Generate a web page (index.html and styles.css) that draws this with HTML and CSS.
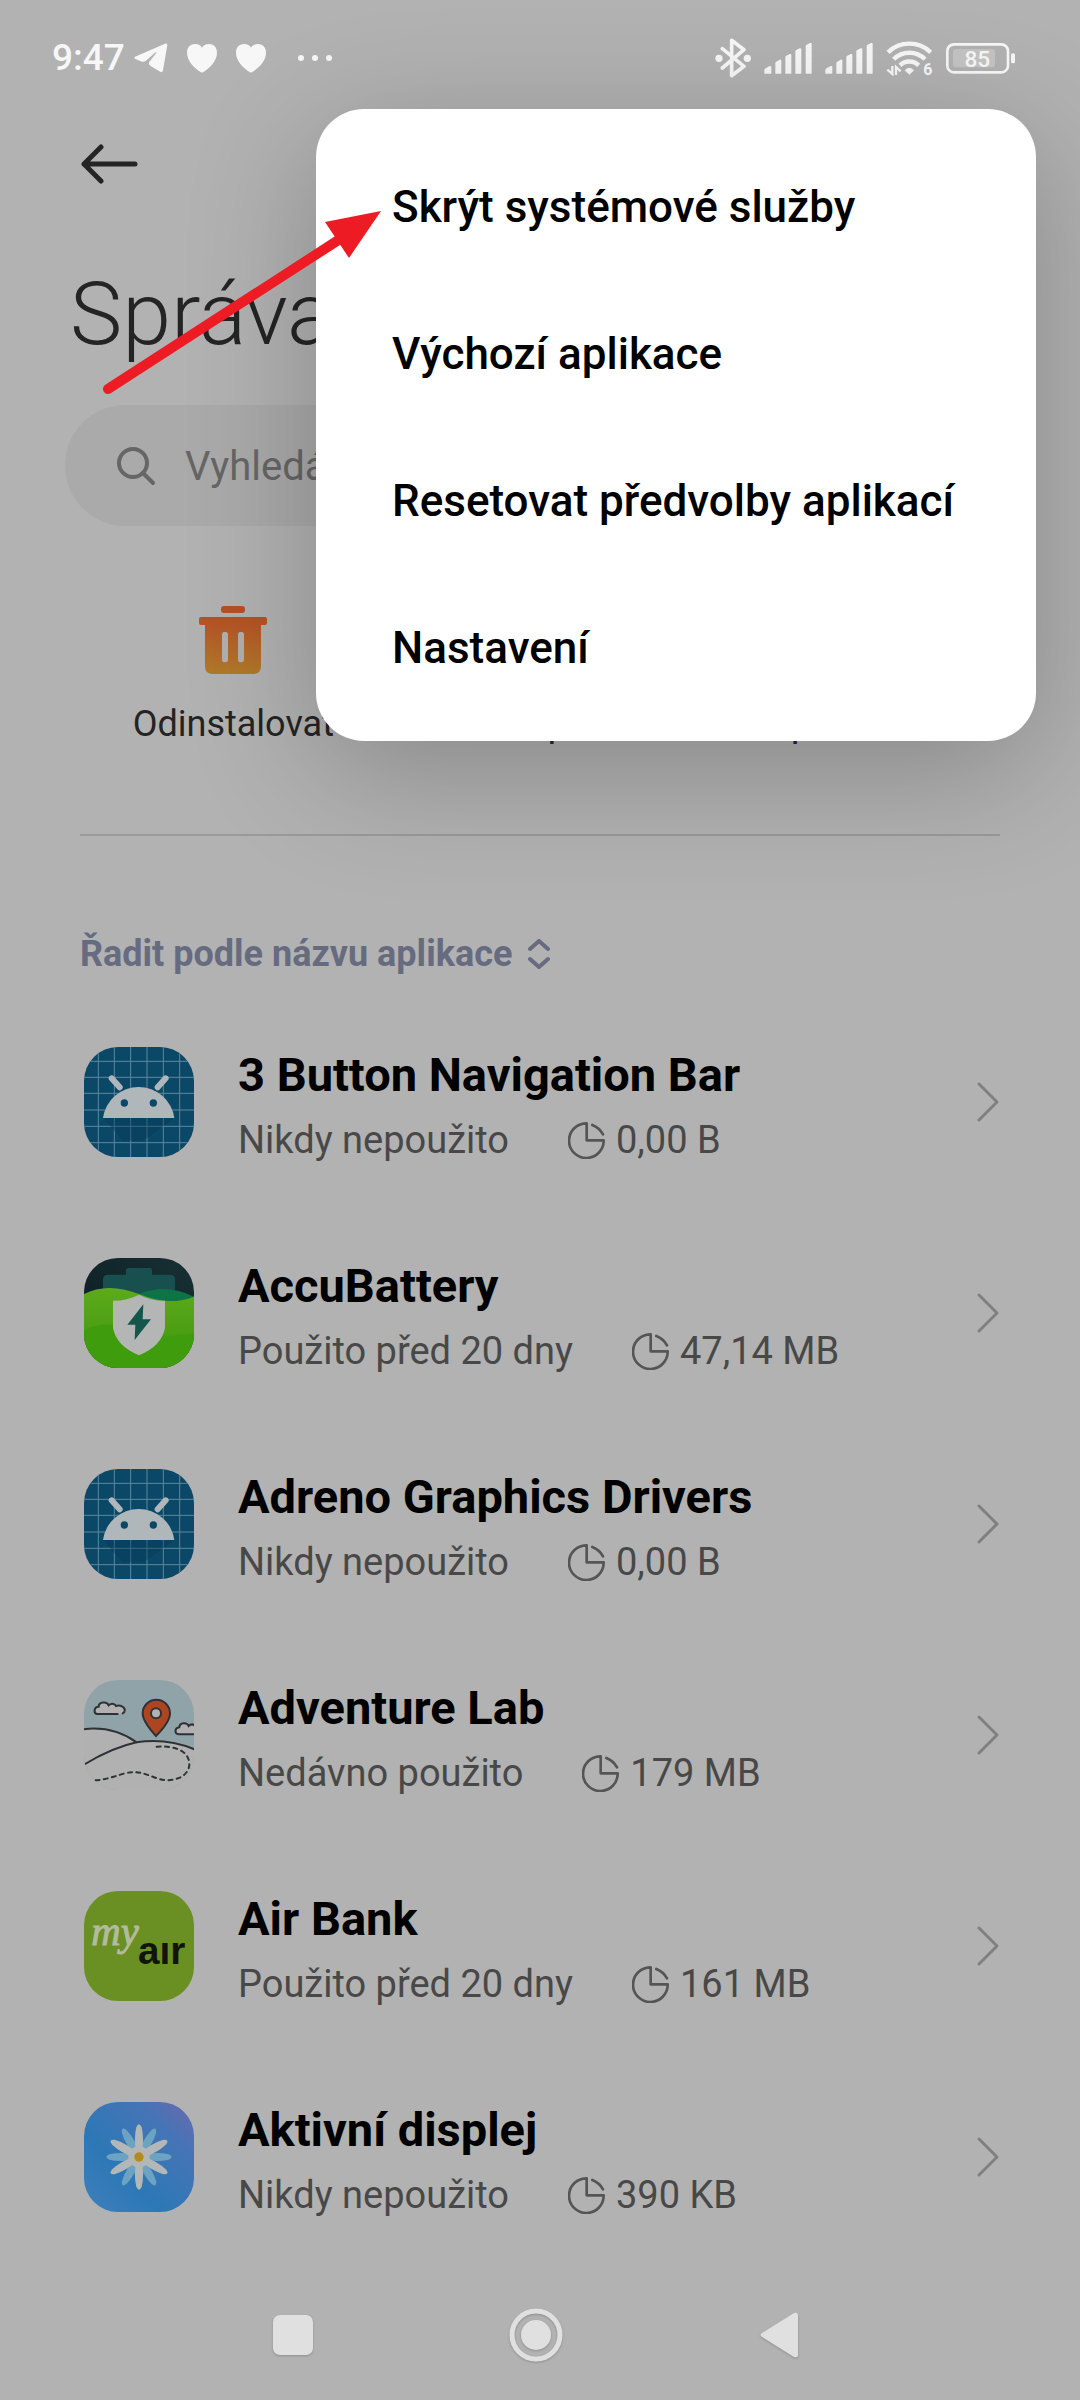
FILE: index.html
```html
<!DOCTYPE html>
<html lang="cs">
<head>
  <meta charset="UTF-8">
  <meta name="viewport" content="width=device-width, initial-scale=1.0">
  <title>Správa aplikací</title>
  <link rel="stylesheet" href="styles.css">
</head>
<body>

<!-- Shared symbols -->
<svg class="symbols" aria-hidden="true">
  <symbol id="heart" viewBox="0 0 90 87">
    <path d="M45 86C20 72 0 50 0 26 0 8 12 0 24 0c10 0 18 5 21 11C48 5 56 0 66 0c12 0 24 8 24 26 0 24-20 46-45 60z"/>
  </symbol>
  <symbol id="signal" viewBox="0 0 144 93">
    <path d="M1 92V82q0-4 4-6l12-7q5-1 5 3v20zM34 92V60q0-3 3-4l10-6q5-1 5 3v39zM64 92V42q0-3 3-4l10-5q5-1 5 3v56zM94 92V25q0-3 3-4l10-5q5-1 5 3v73zM125 92V9q0-3 3-4l10-5q5-1 5 3v89z"/>
  </symbol>
  <symbol id="pie" viewBox="0 0 111 111">
    <path d="M56 4A52 52 0 1 0 107 55H56zM73 9q21 8 32 28" fill="none" stroke="currentColor" stroke-width="8" stroke-linejoin="round" stroke-linecap="round"/>
  </symbol>
  <symbol id="chevron" viewBox="0 0 24 42">
    <path d="M3 3l18 18L3 39" fill="none" stroke="currentColor" stroke-width="3" stroke-linecap="round" stroke-linejoin="round"/>
  </symbol>
  <symbol id="android" viewBox="0 0 330 330">
    <rect width="330" height="330" fill="#0b4868"/>
    <path d="M43 0v330M91 0v330M140 0v330M189 0v330M238 0v330M287 0v330M0 43h330M0 91h330M0 139h330M0 189h330M0 238h330M0 287h330" stroke="#5f8799" stroke-width="3"/>
    <path d="M58 214h212l-90 66h-64z" fill="#083a55" opacity=".4"/>
    <path d="M57 213a108 108 0 0 1 214 0z" fill="#afb7bb"/>
    <path d="M83 94l24 27M245 94l-24 27" stroke="#afb7bb" stroke-width="18" stroke-linecap="round"/>
    <circle cx="121" cy="168" r="11" fill="#0b4868"/>
    <circle cx="208" cy="168" r="11" fill="#0b4868"/>
  </symbol>
</svg>

<div class="status">
  <div class="status-left">
    <span class="time">9:47</span>
    <svg width="34" height="30" viewBox="0 0 102 90"><path d="M3 41q-4 4 1 7l20 8q6 1 12-3l26-23q10-8 2 4L46 56q-4 8 4 13l30 18q6 2 7-5L100 6q0-6-7-4z"/></svg>
    <svg width="30" height="29"><use href="#heart"/></svg>
    <svg width="30" height="29"><use href="#heart"/></svg>
    <svg class="dots" width="36" height="8" viewBox="0 0 36 8"><circle cx="4" cy="4" r="3"/><circle cx="18" cy="4" r="3"/><circle cx="32" cy="4" r="3"/></svg>
  </div>
  <div class="status-right">
    <!-- bluetooth -->
    <svg width="36" height="40" viewBox="0 0 108 120"><path d="M22 32l65 53-37 28V7l37 28-65 55" fill="none" stroke="#f7f7f7" stroke-width="11" stroke-linecap="round" stroke-linejoin="round"/><circle cx="12" cy="61" r="11"/><circle cx="97" cy="61" r="11"/></svg>
    <svg width="48" height="31"><use href="#signal"/></svg>
    <svg width="48" height="31"><use href="#signal"/></svg>
    <!-- wifi -->
    <svg width="47" height="36" viewBox="0 0 141 108">
      <path d="M6 37a92 92 0 0 1 128 0M23 58a66 66 0 0 1 94 0M42 76a40 40 0 0 1 56 0" fill="none" stroke="#f7f7f7" stroke-width="13"/>
      <path d="M56 91q14-16 28 0l-14 13z"/>
      <path d="M19 78v24L4 89M30 105V81l14 13" fill="none" stroke="#f7f7f7" stroke-width="7"/>
      <text x="112" y="104" font-size="48" font-weight="700">6</text>
    </svg>
    <!-- battery -->
    <svg width="69" height="31" viewBox="0 0 207 93">
      <rect x="4" y="4" width="182" height="84" rx="20" fill="none" stroke="#f7f7f7" stroke-width="8"/>
      <rect x="21" y="18" width="126" height="55" rx="9" fill="#c4c4c4"/>
      <rect x="195" y="31" width="12" height="30" rx="5"/>
      <text x="94" y="71" font-size="68" font-weight="500" text-anchor="middle">85</text>
    </svg>
  </div>
</div>

<header class="app-bar">
  <button class="back" aria-label="Zpět">
    <svg width="58" height="40" viewBox="0 0 58 40"><path d="M55 20H4M21 3L4 20l17 17" fill="none" stroke="#242424" stroke-width="5" stroke-linecap="round" stroke-linejoin="round"/></svg>
  </button>
</header>

<main>
  <h1>Správa aplikací</h1>

  <label class="search">
    <svg width="42" height="42" viewBox="0 0 42 42"><circle cx="18" cy="18" r="14" fill="none" stroke="#666" stroke-width="4"/><path d="M28 28l10 10" stroke="#666" stroke-width="4" stroke-linecap="round"/></svg>
    <input type="search" placeholder="Vyhledávání" aria-label="Vyhledávání">
  </label>

  <div class="actions">
    <button>
      <svg width="68" height="68" viewBox="0 0 204 204">
        <defs><linearGradient id="bin" x1="0" y1="0" x2="0" y2="1"><stop offset="0" stop-color="#b65026"/><stop offset="1" stop-color="#b07a2a"/></linearGradient></defs>
        <rect x="66" y="0" width="72" height="21" rx="9" fill="#b65026"/>
        <path d="M6 33h192q6 0 6 6v12q0 6-6 6h-12v124q0 23-23 23H41q-23 0-23-23V57H6q-6 0-6-6V39q0-6 6-6z" fill="url(#bin)"/>
        <rect x="69" y="78" width="18" height="91" rx="7" fill="#b0b0b0"/>
        <rect x="117" y="78" width="18" height="91" rx="7" fill="#b0b0b0"/>
      </svg>
      <span>Odinstalovat</span>
    </button>
    <button>
      <svg width="68" height="68" viewBox="0 0 68 68"><rect x="4" y="4" width="44" height="44" rx="8" fill="#2f66a8"/><rect x="20" y="20" width="44" height="44" rx="8" fill="#3f7cc0"/></svg>
      <span>Duální aplikace</span>
    </button>
    <button>
      <svg width="68" height="68" viewBox="0 0 68 68"><path d="M34 2l28 10v22q0 22-28 32Q6 56 6 34V12z" fill="#2d8a5a"/></svg>
      <span>Oprávnění</span>
    </button>
  </div>

  <hr>

  <button class="sort">
    Řadit podle názvu aplikace
    <svg width="22" height="30" viewBox="0 0 22 30"><path d="M2 10l9-8 9 8M2 20l9 8 9-8" fill="none" stroke="#666b80" stroke-width="4" stroke-linecap="round" stroke-linejoin="round"/></svg>
  </button>

  <div class="apps">
    <a class="app" href="#">
      <svg class="app-icon"><use href="#android"/></svg>
      <div class="app-text">
        <h2>3 Button Navigation Bar</h2>
        <p>Nikdy nepoužito <span class="size"><svg><use href="#pie"/></svg>0,00 B</span></p>
      </div>
      <svg class="chevron"><use href="#chevron"/></svg>
    </a>

    <a class="app" href="#">
      <svg class="app-icon" viewBox="0 0 330 330">
        <defs>
          <linearGradient id="night" x1="0" y1="1" x2="1" y2="0"><stop offset="0" stop-color="#0b1a20"/><stop offset="1" stop-color="#173034"/></linearGradient>
          <linearGradient id="grass" x1="0" y1="0" x2="0" y2="1"><stop offset="0" stop-color="#5dab1c"/><stop offset="1" stop-color="#3d930c"/></linearGradient>
        </defs>
        <rect width="330" height="330" fill="url(#night)"/>
        <path d="M57 140V64q0-14 14-14h55V36q0-6 6-6h66q6 0 6 6v14h55q14 0 14 14v76z" fill="#17504e"/>
        <path d="M165 108q80-34 165 8v40H165z" fill="#0e7346"/>
        <path d="M0 108q70-36 165 0 90 38 165 8v214H0z" fill="url(#grass)"/>
        <path d="M0 216q50-22 90-14 80 50 240 24v104H0z" fill="#3f9c0c"/>
        <path d="M165 110q34 18 78 18v82q-10 54-78 82-68-28-78-82v-82q44 0 78-18z" fill="#b3b6b4"/>
        <path d="M178 139l-48 61h24l-2 46 49-62h-25z" fill="#12564c"/>
      </svg>
      <div class="app-text">
        <h2>AccuBattery</h2>
        <p>Použito před 20 dny <span class="size"><svg><use href="#pie"/></svg>47,14 MB</span></p>
      </div>
      <svg class="chevron"><use href="#chevron"/></svg>
    </a>

    <a class="app" href="#">
      <svg class="app-icon"><use href="#android"/></svg>
      <div class="app-text">
        <h2>Adreno Graphics Drivers</h2>
        <p>Nikdy nepoužito <span class="size"><svg><use href="#pie"/></svg>0,00 B</span></p>
      </div>
      <svg class="chevron"><use href="#chevron"/></svg>
    </a>

    <a class="app" href="#">
      <svg class="app-icon" viewBox="0 0 330 330">
        <rect width="330" height="330" fill="#90a3a9"/>
        <path d="M0 148q90-10 158 38 90-14 172 22v122H0z" fill="#b1b1b1"/>
        <g fill="none" stroke="#2f3234" stroke-width="6" stroke-linecap="round">
          <path d="M-4 148q90-12 162 39M-4 256q90-54 162-69 90-14 176 22"/>
          <path d="M218 200c60-4 96 16 98 50 2 40-50 60-94 46-34-12-60-26-100-16-40 12-70 24-108 20" stroke-dasharray="12 13"/>
          <path d="M101 102H38c-10-4-8-22 6-22 0-16 26-16 30-4 10-8 20-4 22 2 14-4 28 4 26 14 0 4-2 6-6 8" fill="#b1b1b1"/>
          <path d="M340 163h-56c-14-2-12-20 2-21 0-16 24-16 28-4 8-8 16-4 20 0" fill="#b1b1b1"/>
          <path d="M216 168c-26-28-40-48-40-68a41 41 0 0 1 82 0c0 20-16 42-42 68z" fill="#ad4620"/>
          <circle cx="216" cy="100" r="15" fill="#b1b1b1"/>
        </g>
      </svg>
      <div class="app-text">
        <h2>Adventure Lab</h2>
        <p>Nedávno použito <span class="size"><svg><use href="#pie"/></svg>179 MB</span></p>
      </div>
      <svg class="chevron"><use href="#chevron"/></svg>
    </a>

    <a class="app" href="#">
      <svg class="app-icon" viewBox="0 0 330 330">
        <rect width="330" height="330" fill="#6a9024"/>
        <text class="logo-my" x="22" y="162">my</text>
        <text class="logo-air" x="162" y="218">aır</text>
      </svg>
      <div class="app-text">
        <h2>Air Bank</h2>
        <p>Použito před 20 dny <span class="size"><svg><use href="#pie"/></svg>161 MB</span></p>
      </div>
      <svg class="chevron"><use href="#chevron"/></svg>
    </a>

    <a class="app" href="#">
      <svg class="app-icon" viewBox="0 0 330 330">
        <defs>
          <linearGradient id="sky" x1="0" y1="1" x2="1" y2="0"><stop offset="0" stop-color="#3f80ba"/><stop offset=".35" stop-color="#2c78b6"/><stop offset=".75" stop-color="#4674b6"/><stop offset="1" stop-color="#6a6aae"/></linearGradient>
          <path id="petal" d="M158 165q-10-55-1-89 8-18 16 0 9 34-1 89z"/>
        </defs>
        <rect width="330" height="330" fill="url(#sky)"/>
        <g fill="#6da3c2">
          <use href="#petal" transform="rotate(30 165 165)"/>
          <use href="#petal" transform="rotate(90 165 165)"/>
          <use href="#petal" transform="rotate(150 165 165)"/>
          <use href="#petal" transform="rotate(210 165 165)"/>
          <use href="#petal" transform="rotate(270 165 165)"/>
          <use href="#petal" transform="rotate(330 165 165)"/>
        </g>
        <g fill="#b3b7b8">
          <circle cx="165" cy="165" r="32"/>
          <use href="#petal"/>
          <use href="#petal" transform="rotate(60 165 165)"/>
          <use href="#petal" transform="rotate(120 165 165)"/>
          <use href="#petal" transform="rotate(180 165 165)"/>
          <use href="#petal" transform="rotate(240 165 165)"/>
          <use href="#petal" transform="rotate(300 165 165)"/>
        </g>
        <circle cx="165" cy="165" r="14" fill="#b38a1c"/>
      </svg>
      <div class="app-text">
        <h2>Aktivní displej</h2>
        <p>Nikdy nepoužito <span class="size"><svg><use href="#pie"/></svg>390 KB</span></p>
      </div>
      <svg class="chevron"><use href="#chevron"/></svg>
    </a>
  </div>
</main>

<nav class="nav-bar">
  <button aria-label="Poslední aplikace"><svg width="40" height="40" viewBox="0 0 40 40"><rect width="40" height="40" rx="7"/></svg></button>
  <button aria-label="Domů"><svg width="54" height="54" viewBox="0 0 54 54"><circle cx="27" cy="27" r="24" fill="none" stroke="#e0e0e0" stroke-width="5"/><circle cx="27" cy="27" r="15"/></svg></button>
  <button aria-label="Zpět"><svg width="38" height="46" viewBox="0 0 38 46"><path d="M2 21L34 1q4-1 4 2v40q0 3-4 2L2 25q-3-2 0-4z"/></svg></button>
</nav>

<!-- Popup menu -->
<ul class="menu">
  <li><button>Skrýt systémové služby</button></li>
  <li><button>Výchozí aplikace</button></li>
  <li><button>Resetovat předvolby aplikací</button></li>
  <li><button>Nastavení</button></li>
</ul>

<svg class="pointer" width="284" height="190" viewBox="0 0 284 190">
  <path d="M8 183L240 33" stroke="#ed1c24" stroke-width="10" stroke-linecap="round"/>
  <path d="M281 5l-56 11 24 36z" fill="#ed1c24"/>
</svg>

</body>
</html>
```
FILE: styles.css
```css
* {
  box-sizing: border-box;
}

body {
  margin: 0;
  min-height: 100vh;
  display: flex;
  flex-direction: column;
  position: relative;
  overflow-x: hidden;
  background: #b2b2b2;
  color: #242424;
  font-family: Roboto, "Noto Sans", sans-serif;
}

button {
  padding: 0;
  border: none;
  background: none;
  color: inherit;
  font: inherit;
  cursor: pointer;
}

svg {
  display: block;
  flex: none;
}

.symbols {
  position: absolute;
  width: 0;
  height: 0;
}

/* Status bar */
.status {
  display: flex;
  justify-content: space-between;
  align-items: center;
  height: 116px;
  padding: 0 65px 0 52px;
  fill: #f7f7f7;
  color: #f7f7f7;
}

.status-left,
.status-right {
  display: flex;
  align-items: center;
}

.status-left {
  gap: 19px;
}

.time {
  font-size: 37px;
  font-weight: 500;
  line-height: 40px;
  margin-right: -10px;
}

.dots {
  margin-left: 12px;
}

.status-right {
  gap: 13px;
}

/* Header */
.app-bar {
  display: flex;
  align-items: center;
  height: 96px;
  padding: 0 80px;
}

main {
  display: flex;
  flex-direction: column;
}

h1 {
  margin: 50px 70px 39px;
  font-size: 88px;
  font-weight: 300;
  line-height: 104px;
}

.search {
  display: flex;
  align-items: center;
  gap: 28px;
  height: 121px;
  margin: 0 65px;
  padding: 0 50px;
  border-radius: 61px;
  background: #aaa;
}

.search input {
  flex: 1;
  min-width: 0;
  padding: 2px 0 0;
  border: none;
  outline: none;
  background: none;
  color: #242424;
  font: 40px/48px Roboto, "Noto Sans", sans-serif;
}

.search input::placeholder {
  color: #666;
  opacity: 1;
}

.actions {
  display: grid;
  grid-template-columns: repeat(3, 1fr);
  margin: 80px 80px 88px;
}

.actions button {
  display: flex;
  flex-direction: column;
  align-items: center;
  gap: 28px;
  font-size: 36px;
  line-height: 44px;
}

hr {
  width: calc(100% - 160px);
  height: 2px;
  margin: 0 80px;
  border: none;
  background: #9a9a9a;
}

.sort {
  display: flex;
  align-items: center;
  align-self: flex-start;
  gap: 16px;
  margin: 96px 80px 20px;
  color: #666b80;
  font-size: 36px;
  font-weight: 700;
  line-height: 44px;
}

/* App list */
.app {
  display: flex;
  align-items: flex-start;
  padding: 51px 80px 43px 84px;
  color: #000;
  text-decoration: none;
}

.app-icon {
  width: 110px;
  height: 110px;
  border-radius: 34px;
}

.app-text {
  flex: 1;
  min-width: 0;
  margin-left: 44px;
}

.app h2 {
  margin: 0 0 13px;
  font-size: 47px;
  font-weight: 700;
  line-height: 56px;
}

.app p {
  display: flex;
  align-items: center;
  gap: 59px;
  margin: 0;
  color: #484848;
  font-size: 38px;
  line-height: 48px;
}

.size {
  display: flex;
  align-items: center;
  gap: 11px;
}

.size svg {
  width: 37px;
  height: 37px;
  color: #555;
}

.chevron {
  width: 24px;
  height: 110px;
  color: #808080;
}

.logo-my {
  fill: #b3bb9c;
  stroke: #b3bb9c;
  stroke-width: 3px;
  font: italic 122px "Liberation Serif", serif;
}

.logo-air {
  fill: #11140a;
  font: 700 116px "Liberation Sans", sans-serif;
}

/* System navigation */
.nav-bar {
  display: flex;
  justify-content: center;
  height: 130px;
  margin-top: auto;
  padding-right: 8px;
}

.nav-bar button {
  width: 243px;
  display: flex;
  justify-content: center;
  align-items: center;
  fill: #e0e0e0;
}

.nav-bar svg {
  filter: drop-shadow(0 1px 1px rgba(0, 0, 0, 0.2));
}

/* Popup menu */
.menu {
  position: absolute;
  top: 109px;
  right: 44px;
  width: 720px;
  margin: 0;
  padding: 24px 0 20px;
  list-style: none;
  border-radius: 48px;
  background: #fff;
  box-shadow: 0 30px 130px rgba(0, 0, 0, 0.24);
}

.menu button {
  display: block;
  width: 100%;
  height: 147px;
  padding: 0 76px;
  color: #000;
  font-size: 44px;
  font-weight: 500;
  text-align: left;
}

.pointer {
  position: absolute;
  top: 206px;
  left: 100px;
}
```
